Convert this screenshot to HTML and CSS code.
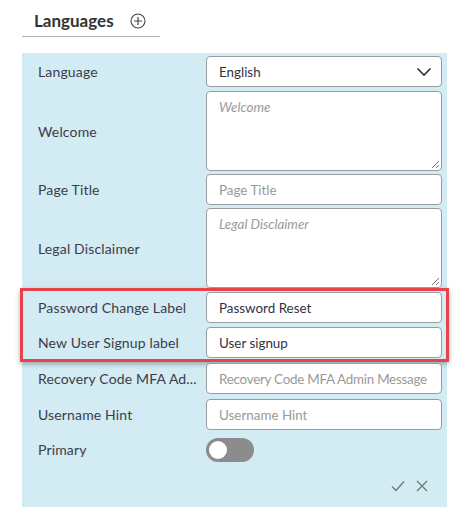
FILE: index.html
```html
<!DOCTYPE html>
<html>
<head>
<meta charset="utf-8">
<link rel="stylesheet" href="styles.css">
</head>
<body>
<div class="page">
  <div class="header">
    <span class="title">Languages</span>
    <svg class="add" width="16" height="16" viewBox="0 0 16 16"><circle cx="8" cy="8" r="7" fill="none" stroke="#444" stroke-width="1.1"/><path d="M8 4v8M4 8h8" stroke="#444" stroke-width="1.2"/></svg>
  </div>
  <div class="panel">
    <div class="row r-select">
      <div class="label">Language</div>
      <div class="field select"><span class="val">English</span>
        <svg class="chev" width="16" height="10" viewBox="0 0 16 10"><path d="M1.5 1.5L8 8l6.5-6.5" fill="none" stroke="#333" stroke-width="1.6"/></svg>
      </div>
    </div>
    <div class="row r-welcome">
      <div class="label">Welcome</div>
      <div class="field area"><span class="ph italic">Welcome</span><span class="grip"></span></div>
    </div>
    <div class="row r-title">
      <div class="label">Page Title</div>
      <div class="field"><span class="ph">Page Title</span></div>
    </div>
    <div class="row r-legal">
      <div class="label">Legal Disclaimer</div>
      <div class="field area"><span class="ph italic">Legal Disclaimer</span><span class="grip"></span></div>
    </div>
    <div class="highlight">
      <div class="row r-pw">
        <div class="label">Password Change Label</div>
        <div class="field"><span class="val">Password Reset</span></div>
      </div>
      <div class="row r-signup">
        <div class="label">New User Signup label</div>
        <div class="field"><span class="val">User signup</span></div>
      </div>
    </div>
    <div class="row r-recovery">
      <div class="label">Recovery Code MFA Ad...</div>
      <div class="field"><span class="ph">Recovery Code MFA Admin Message</span></div>
    </div>
    <div class="row r-hint">
      <div class="label">Username Hint</div>
      <div class="field"><span class="ph">Username Hint</span></div>
    </div>
    <div class="row r-primary">
      <div class="label">Primary</div>
      <div class="toggle"><span class="knob"></span></div>
    </div>
    <div class="actions">
      <svg width="14" height="12" viewBox="0 0 14 12"><path d="M1 6.5l4 4L13 1.5" fill="none" stroke="#777" stroke-width="1.4"/></svg>
      <svg width="12" height="12" viewBox="0 0 12 12"><path d="M1 1l10 10M11 1L1 11" fill="none" stroke="#777" stroke-width="1.4"/></svg>
    </div>
  </div>
</div>
</body>
</html>
```
FILE: styles.css
```css
html, body {
  margin: 0;
  padding: 0;
  background: #fff;
}
body {
  font-family: Lato, "Open Sans", "Liberation Sans", sans-serif;
  color: #3a3a44;
  width: 455px;
  height: 522px;
  overflow: hidden;
}
.page {
  padding-left: 22px;
}
.header {
  width: 126px;
  height: 36px;
  padding-left: 12px;
  border-bottom: 1px solid #b4b4b4;
  display: flex;
  align-items: center;
  box-sizing: content-box;
}
.title {
  font-size: 17px;
  font-weight: 700;
  color: #333;
  margin-top: 4px;
}
.add {
  margin-left: 16px;
  margin-top: 6px;
}
.panel {
  margin-top: 16px;
  width: 425px;
  height: 454px;
  background: #d3ebf3;
  padding-top: 3px;
  box-sizing: border-box;
}
.row {
  display: grid;
  grid-template-columns: 168px 236px;
  align-items: center;
  padding-left: 16px;
}
.label {
  font-size: 14px;
  letter-spacing: 0.15px;
  color: #3c3c48;
  white-space: nowrap;
}
.field {
  height: 31px;
  background: #fff;
  border: 1px solid #9c9c9c;
  border-radius: 4px;
  box-sizing: border-box;
  display: flex;
  align-items: center;
  padding-left: 12px;
  font-size: 13.4px;
  position: relative;
  white-space: nowrap;
}
.val {
  color: #333340;
}
.ph {
  color: #9a9a9a;
}
.r-recovery .ph {
  letter-spacing: -0.25px;
}
.italic {
  font-style: italic;
}
.select {
  justify-content: space-between;
  padding-right: 9px;
}
.area {
  height: 80px;
  align-items: flex-start;
  padding-top: 7px;
}
.grip {
  position: absolute;
  right: 2px;
  bottom: 2px;
  width: 7px;
  height: 7px;
  background: linear-gradient(135deg, transparent 45%, #777 45%, #777 55%, transparent 55%, transparent 72%, #777 72%, #777 82%, transparent 82%);
}
.r-select { margin-bottom: 4px; }
.r-welcome { margin-bottom: 3px; }
.r-title { margin-bottom: 3px; }
.highlight {
  margin: 0 -2px;
  border: 3px solid #e8434a;
  box-shadow: 0 2px 5px rgba(0, 0, 0, 0.3);
  padding: 1px 0;
  display: flex;
  flex-direction: column;
  gap: 4px;
}
.highlight .row {
  padding-left: 15px;
}
.r-recovery { margin-top: 1px; margin-bottom: 5px; }
.r-hint { margin-bottom: 8px; }
.r-primary .label { margin-top: -2px; }
.toggle {
  width: 48px;
  height: 24px;
  border-radius: 12px;
  background: #8c8c8c;
  position: relative;
}
.knob {
  position: absolute;
  left: 3px;
  top: 3px;
  width: 18px;
  height: 18px;
  border-radius: 50%;
  background: #fff;
}
.actions {
  display: flex;
  justify-content: flex-end;
  align-items: center;
  gap: 11px;
  padding-right: 19px;
  margin-top: 18px;
}
```
